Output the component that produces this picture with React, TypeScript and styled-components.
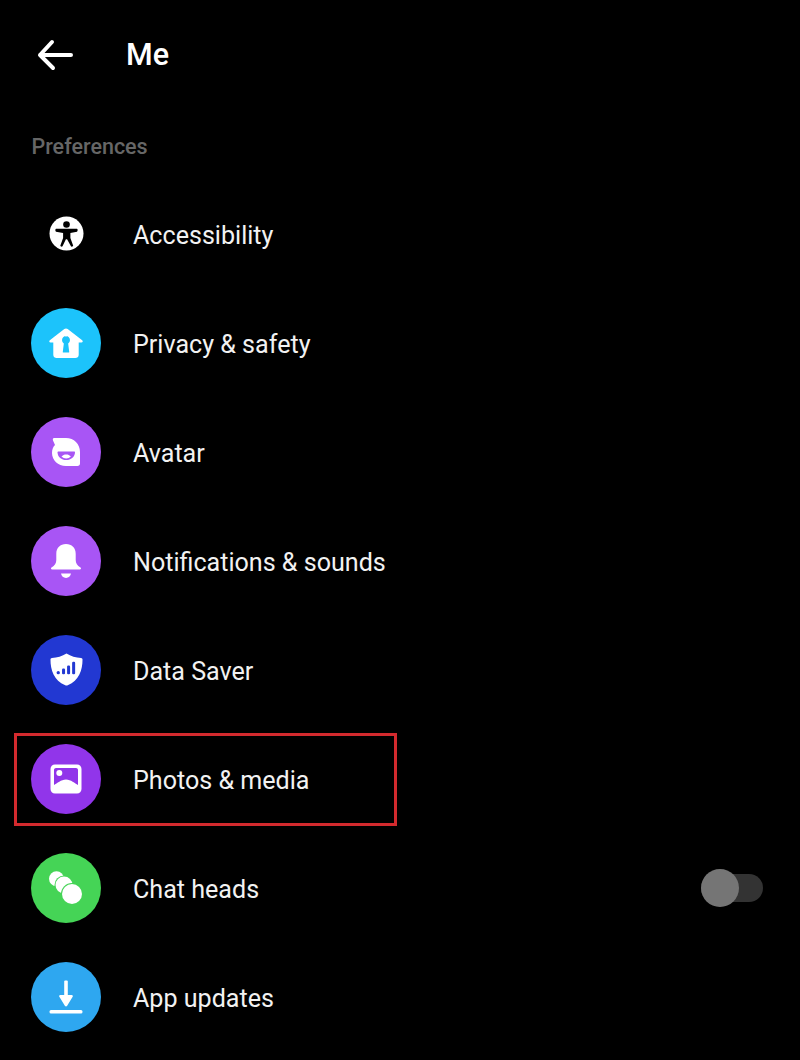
import React from "react";
import styled, { createGlobalStyle } from "styled-components";

const Global = createGlobalStyle`
  html, body { margin: 0; padding: 0; background: #000; }
  body { font-family: Roboto, "Liberation Sans", sans-serif; }
`;

const Screen = styled.div`
  width: 800px;
  height: 1060px;
  background: #000;
  overflow: hidden;
  color: #fff;
`;

const Header = styled.header`
  height: 109px;
  display: flex;
  align-items: center;
  padding-left: 36px;
  gap: 52px;
`;

const Title = styled.h1`
  margin: 0;
  font-size: 30.5px;
  font-weight: 500;
  line-height: 34px;
`;

const SectionLabel = styled.div`
  height: 70px;
  padding: 26px 0 0 31.5px;
  box-sizing: border-box;
  font-size: 21.5px;
  font-weight: 500;
  line-height: 24px;
  color: #666;
`;

const Row = styled.div`
  position: relative;
  height: 109px;
  display: flex;
  align-items: center;
  padding: 0 37px 0 31px;
  gap: 32px;
`;

const IconDisc = styled.div<{ $bg: string }>`
  width: 70px;
  height: 70px;
  flex: none;
  border-radius: 50%;
  background: ${(p) => p.$bg};
  display: flex;
  align-items: center;
  justify-content: center;
`;

const Label = styled.span`
  flex: 1;
  padding-top: 4px;
  font-size: 25.1px;
  line-height: 30px;
  color: #f2f2f2;
`;

const Highlight = styled.div`
  position: absolute;
  left: 14px;
  top: 9px;
  width: 383px;
  height: 93px;
  box-sizing: border-box;
  border: 3px solid #d32a2e;
  pointer-events: none;
`;

const Toggle = styled.div`
  position: relative;
  width: 62px;
  height: 28px;
  margin-top: 1px;
  border-radius: 14px;
  background: #333;
`;

const Knob = styled.div`
  position: absolute;
  left: 0;
  top: -5px;
  width: 38px;
  height: 38px;
  border-radius: 50%;
  background: #757575;
`;

const BackArrow = () => (
  <svg width="38" height="34" viewBox="0 0 38 34" fill="none" stroke="#fff" strokeWidth="4" strokeLinecap="round" strokeLinejoin="round">
    <path d="M35 17H4M16 4L4 17l13 13" />
  </svg>
);

const AccessibilityIcon = () => (
  <svg width="35" height="35" viewBox="0 0 36 36">
    <circle cx="18" cy="18" r="17.5" fill="#fff" />
    <circle cx="18" cy="8.8" r="3.4" fill="#000" />
    <path fill="#000" d="M7.2 13.2h21.600c.9 0 .9 2.700 0 2.900l-6.800 1.500v5l2.800 7.800c.3 1-1.700 1.700-2.200.8L18.600 24h-1.200l-3.500 7.200c-.5.900-2.500.2-2.200-.8l2.800-7.800v-5l-7.300-1.500c-.9-.2-.9-2.900 0-2.900z" />
  </svg>
);

const HouseIcon = () => (
  <svg width="36" height="32" viewBox="0 0 38 34">
    <path
      fill="#fff"
      fillRule="evenodd"
      d="M19 1.500c.7 0 1.300.3 1.800.7l15.400 12c1.100.9.600 2.400-.8 2.400h-2.900v12.900c0 2.200-1.600 3.500-3.600 3.500H9.100c-2 0-3.600-1.300-3.600-3.500V16.600H2.600c-1.400 0-1.900-1.500-.8-2.400l15.400-12c.5-.4 1.100-.7 1.800-.7zM19 9.600c-2.400 0-4.200 1.900-4.200 4.300 0 1.500.7 2.800 1.900 3.600l-1.100 8.700c-.1.600.3 1 .8 1h5.200c.5 0 .9-.4.800-1l-1.100-8.700c1.200-.8 1.900-2.100 1.900-3.600 0-2.400-1.800-4.300-4.200-4.300z"
    />
  </svg>
);

const AvatarIcon = () => (
  <svg width="30" height="30" viewBox="0 0 30 30">
    <path
      fill="#fff"
      fillRule="evenodd"
      d="M3 1h12c8 0 14 6 14 14v11.500c0 1.400-1 2.500-2.500 2.500H15C7 29 1 23 1 16c0-3.500 1-6 3-8L2 3.500C1.500 2 2 1 3 1z"
    />
    <path fill="#a855f5" d="M7.500 14.500h15.500c.8 0 1 .6 1 1.200C23.500 20 20 23 15.200 23s-8.300-3-8.700-7.300c0-.6.300-1.200 1-1.200z" />
    <path fill="#fff" d="M10.500 19.600c1.300-1.500 2.800-2.100 4.700-2.100s3.400.6 4.700 2.100c-1.300 1.300-2.800 1.900-4.700 1.900s-3.400-.6-4.700-1.900z" />
  </svg>
);

const BellIcon = () => (
  <svg width="32" height="36" viewBox="0 0 32 36">
    <path fill="#fff" d="M16 1c5.800 0 9.700 3.900 9.700 9.700v6.300c0 3 1.500 5.500 4.800 7.600.9.600.6 1.900-.7 1.900H2.200c-1.300 0-1.600-1.300-.7-1.900 3.300-2.100 4.800-4.600 4.800-7.600v-6.300C6.300 4.900 10.200 1 16 1z" />
    <path fill="#fff" d="M11 30.500h10c-.4 2.600-2.500 4.400-5 4.400s-4.600-1.800-5-4.400z" />
  </svg>
);

const ShieldIcon = () => (
  <svg width="33" height="33" viewBox="0 0 34 34">
    <path fill="#fff" d="M17 .500c4.500 2.900 9.600 4.300 15 4.600 1 .1 1.500.7 1.500 1.600 0 11-3.500 21.500-15.200 26.500-.9.400-1.700.4-2.600 0C4 28.200.5 17.700.5 6.700c0-.9.500-1.500 1.500-1.600C7.400 4.800 12.500 3.400 17 .500z" />
    <g fill="#2238d2">
      <circle cx="8.500" cy="20.300" r="1.700" />
      <rect x="12.400" y="16" width="3.100" height="6" rx="1.200" />
      <rect x="17.600" y="13" width="3.100" height="9" rx="1.200" />
      <rect x="22.800" y="9" width="3.100" height="13" rx="1.200" />
    </g>
  </svg>
);

const PhotoIcon = () => (
  <svg width="32" height="30" viewBox="0 0 32 30">
    <path
      fill="#fff"
      fillRule="evenodd"
      d="M5 .5h22c2.600 0 4.500 1.900 4.500 4.500v20c0 2.600-1.900 4.500-4.500 4.500H5C2.400 29.500.5 27.600.5 25V5C.5 2.400 2.400.5 5 .5zM6 4c-1.100 0-2 .9-2 2v15c3.200-1.500 7-5.500 12-5.500s8.800 4 12 5.500V6c0-1.100-.9-2-2-2z"
    />
    <circle cx="9.300" cy="9" r="3" fill="#fff" />
  </svg>
);

const BubblesIcon = () => (
  <svg width="34" height="34" viewBox="0 0 34 34">
    <defs>
      <mask id="stack-back">
        <rect width="34" height="34" fill="#fff" />
        <circle cx="15" cy="14" r="9.500" fill="#000" />
      </mask>
      <mask id="stack-mid">
        <rect width="34" height="34" fill="#fff" />
        <circle cx="23" cy="23" r="11" fill="#000" />
      </mask>
    </defs>
    <circle cx="7.500" cy="7.800" r="7.500" fill="#fff" mask="url(#stack-back)" />
    <circle cx="15" cy="14" r="8.500" fill="#fff" mask="url(#stack-mid)" />
    <circle cx="23" cy="23" r="10" fill="#fff" />
  </svg>
);

const DownloadIcon = () => (
  <svg width="34" height="34" viewBox="0 0 34 34">
    <rect x="15.200" y="0.500" width="3.600" height="20" fill="#fff" rx="1" />
    <path fill="#fff" d="M10.500 17c-.9-.9-.3-2 .9-2h11.200c1.200 0 1.800 1.100.9 2L18 26c-.5.600-1.500.600-2 0z" />
    <rect x="0.500" y="30" width="33" height="3.400" rx="1.500" fill="#fff" />
  </svg>
);

type Item = { label: string; bg: string; icon: React.ReactNode; marked?: boolean; toggle?: boolean };

const items: Item[] = [
  { label: "Accessibility", bg: "transparent", icon: <AccessibilityIcon /> },
  { label: "Privacy & safety", bg: "#1cc3fb", icon: <HouseIcon /> },
  { label: "Avatar", bg: "#a855f5", icon: <AvatarIcon /> },
  { label: "Notifications & sounds", bg: "#a855f5", icon: <BellIcon /> },
  { label: "Data Saver", bg: "#2238d2", icon: <ShieldIcon /> },
  { label: "Photos & media", bg: "#9135ea", icon: <PhotoIcon />, marked: true },
  { label: "Chat heads", bg: "#45d456", icon: <BubblesIcon />, toggle: true },
  { label: "App updates", bg: "#2ea7f0", icon: <DownloadIcon /> },
];

export default function App() {
  return (
    <Screen>
      <Global />
      <Header>
        <BackArrow />
        <Title>Me</Title>
      </Header>
      <SectionLabel>Preferences</SectionLabel>
      {items.map((item) => (
        <Row key={item.label}>
          <IconDisc $bg={item.bg}>{item.icon}</IconDisc>
          <Label>{item.label}</Label>
          {item.toggle && (
            <Toggle>
              <Knob />
            </Toggle>
          )}
          {item.marked && <Highlight />}
        </Row>
      ))}
    </Screen>
  );
}
